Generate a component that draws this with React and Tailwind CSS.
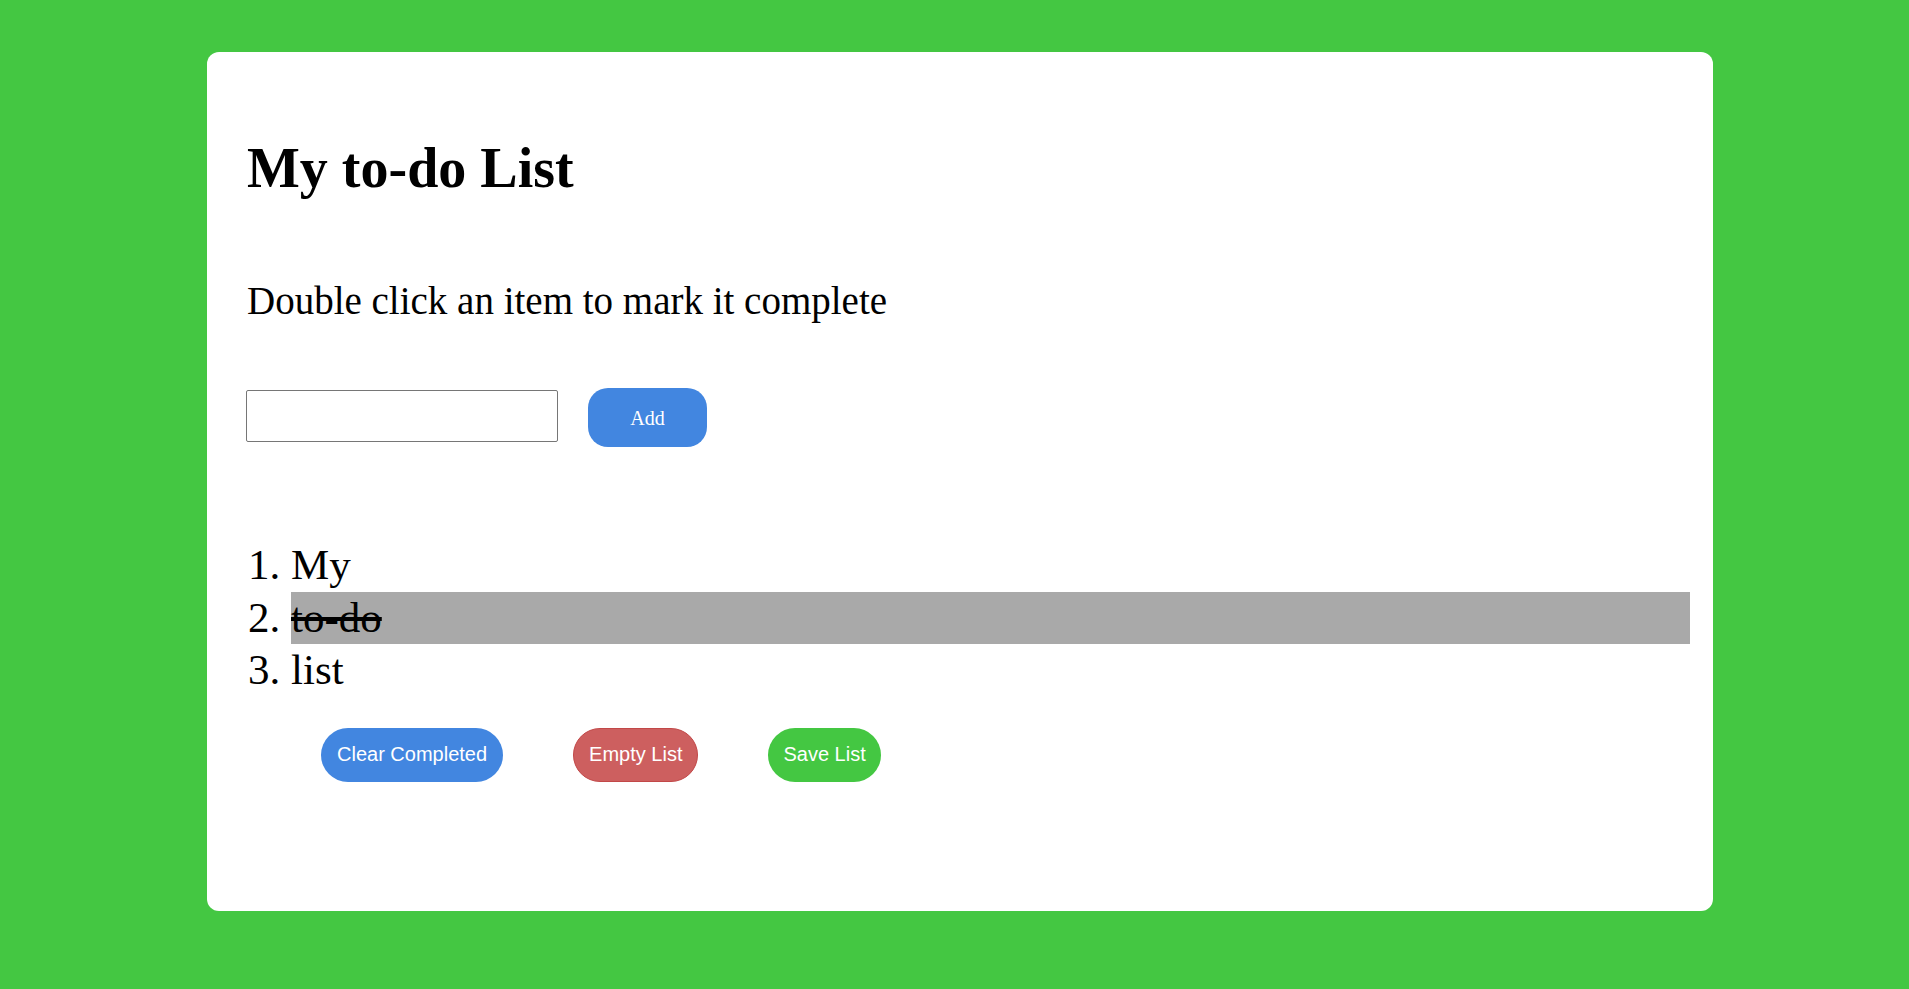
export default function App() {
  const items = [
    { text: "My", done: false },
    { text: "to-do", done: true },
    { text: "list", done: false },
  ];
  return (
    <div className="min-h-screen w-full bg-[#44c742] pt-[52px] pb-[78px]">
      <div className="ml-[207px] w-[1506px] rounded-[12px] bg-white pl-[40px] pr-[23px] pt-[84px] pb-[129px] text-black">
        <h1 className="font-['Liberation_Serif',serif] text-[56px] font-bold leading-[64px]">
          My to-do List
        </h1>
        <p className="mt-[78px] font-['Liberation_Serif',serif] text-[39px] leading-[45px]">
          Double click an item to mark it complete
        </p>
        <div className="mt-[65px] flex items-start gap-[30px]">
          <input
            type="text"
            className="mt-[2px] ml-[-1px] h-[52px] w-[312px] rounded-[2px] border border-[#767676] bg-white px-2 outline-none"
          />
          <button className="h-[59px] w-[119px] rounded-[20px] bg-[#4286e0] font-['Liberation_Serif',serif] text-[20px] text-white">
            Add
          </button>
        </div>
        <ol className="mt-[92px] list-decimal pl-[44px] font-['Liberation_Serif',serif] text-[43px] leading-[52.5px]">
          {items.map((it) => (
            <li
              key={it.text}
              className={it.done ? "bg-[#a9a9a9] line-through" : ""}
            >
              {it.text}
            </li>
          ))}
        </ol>
        <div className="mt-[31px] ml-[74px] flex gap-[70px] font-['Liberation_Sans',Arial,sans-serif] text-[20px] leading-[23px] text-white">
          <button className="flex h-[54px] items-center rounded-full bg-[#4286e0] px-4">
            Clear Completed
          </button>
          <button className="flex h-[54px] items-center rounded-full border border-[#c24848] bg-[#cd5f5f] px-[15px]">
            Empty List
          </button>
          <button className="flex h-[54px] items-center rounded-full bg-[#44c742] px-[15px]">
            Save List
          </button>
        </div>
      </div>
    </div>
  );
}
